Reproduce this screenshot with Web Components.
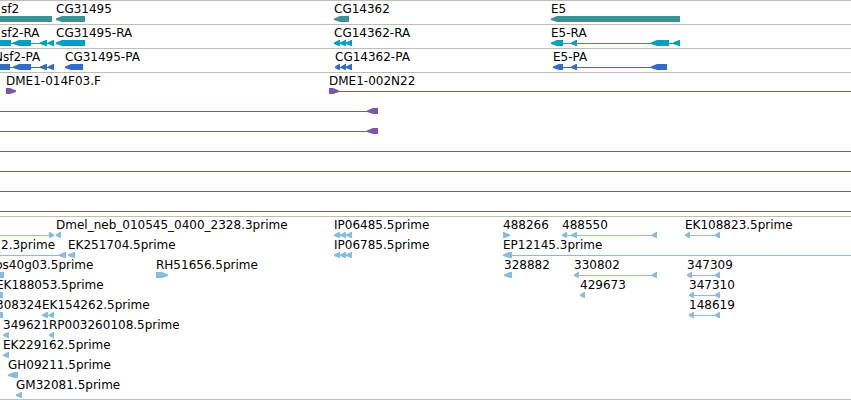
<!DOCTYPE html>
<html lang="en">
<head>
<meta charset="utf-8">
<title>Genome tracks</title>
<style>
body { margin: 0; background: #fff; color: #000; font: 12px/16px "DejaVu Sans", sans-serif; }
</style>
</head>
<body>
<template id="browser-template">
  <style>:host { display: flex; flex-direction: column; overflow: hidden; border-bottom: 1px solid #bdbdbd; }</style>
  <slot></slot>
</template>
<template id="track-template">
  <style>:host { display: flex; flex-direction: column; border-top: 1px solid #bdbdbd; padding-bottom: 3px; }
  :host(:last-child) { padding-bottom: 2px; }</style>
  <slot></slot>
</template>
<template id="lane-template">
  <style>:host { display: block; position: relative; height: 20px; }</style>
  <slot></slot>
</template>
<template id="feature-template">
  <style>
  :host { position: absolute; inset: 0; color: #000; }
  span { position: absolute; top: 0; white-space: nowrap; }
  svg { display: block; width: 100%; height: 100%; overflow: visible; fill: var(--ink); }
  </style>
  <svg aria-hidden="true"></svg><span><slot></slot></span>
</template>

<genome-browser>
  <genome-track style="--ink:#3f9095">
    <genome-lane>
      <genome-feature at="1" parts="-20:52">sf2</genome-feature>
      <genome-feature at="56" parts="56:85">CG31495</genome-feature>
      <genome-feature at="334" parts="334:349">CG14362</genome-feature>
      <genome-feature at="551" parts="551:680">E5</genome-feature>
    </genome-lane>
  </genome-track>
  <genome-track style="--ink:#00a0c2">
    <genome-lane>
      <genome-feature at="1" parts="-20:11 13:31 40:47 48:54">sf2-RA</genome-feature>
      <genome-feature at="56" parts="56:85">CG31495-RA</genome-feature>
      <genome-feature at="334" parts="334:340 340:346 346:352">CG14362-RA</genome-feature>
      <genome-feature at="551" parts="551:563 571:577 651:669 673:680">E5-RA</genome-feature>
    </genome-lane>
  </genome-track>
  <genome-track style="--ink:#316bcd">
    <genome-lane>
      <genome-feature at="-6" parts="-20:10 13:31 40:47 48:54">Nsf2-PA</genome-feature>
      <genome-feature at="65" parts="65:83">CG31495-PA</genome-feature>
      <genome-feature at="335" parts="335:340 341:346 346:352">CG14362-PA</genome-feature>
      <genome-feature at="553" parts="553:563 571:577 651:667">E5-PA</genome-feature>
    </genome-lane>
  </genome-track>
  <genome-track style="--ink:#7657a8">
    <genome-lane>
      <genome-feature at="6" dir="right" parts="6:16">DME1-014F03.F</genome-feature>
      <genome-feature at="329" dir="right" parts="329:339" line="339:end">DME1-002N22</genome-feature>
    </genome-lane>
    <genome-lane><genome-feature parts="367:378" line="0:367"></genome-feature></genome-lane>
    <genome-lane><genome-feature parts="367:378" line="0:367"></genome-feature></genome-lane>
    <genome-lane><genome-feature line="0:end"></genome-feature></genome-lane>
    <genome-lane><genome-feature line="0:end"></genome-feature></genome-lane>
    <genome-lane><genome-feature line="0:end"></genome-feature></genome-lane>
    <genome-lane><genome-feature line="0:end"></genome-feature></genome-lane>
  </genome-track>
  <genome-track style="--ink:#86bcdf">
    <genome-lane>
      <genome-feature dir="right" parts="49:54" line="0:49"></genome-feature>
      <genome-feature at="56" parts="56:61">Dmel_neb_010545_0400_2328.3prime</genome-feature>
      <genome-feature at="334" parts="334:340 340:346 346:352">IP06485.5prime</genome-feature>
      <genome-feature at="503" dir="right" parts="503:510">488266</genome-feature>
      <genome-feature at="562" parts="562:567 571:577 652:657">488550</genome-feature>
      <genome-feature at="685" parts="685:690 715:720">EK108823.5prime</genome-feature>
    </genome-lane>
    <genome-lane>
      <genome-feature at="1" parts="59:66" line="0:59">2.3prime</genome-feature>
      <genome-feature at="68" parts="68:75">EK251704.5prime</genome-feature>
      <genome-feature at="334" parts="334:340 340:346 346:352">IP06785.5prime</genome-feature>
      <genome-feature at="503" parts="503:512" line="512:end">EP12145.3prime</genome-feature>
    </genome-lane>
    <genome-lane>
      <genome-feature at="-5" parts="-10:4">bs40g03.5prime</genome-feature>
      <genome-feature at="156" dir="right" parts="156:168">RH51656.5prime</genome-feature>
      <genome-feature at="504" parts="504:512">328882</genome-feature>
      <genome-feature at="574" parts="574:579 652:657">330802</genome-feature>
      <genome-feature at="687" parts="687:692 715:720">347309</genome-feature>
    </genome-lane>
    <genome-lane>
      <genome-feature at="-4" parts="-10:3">EK188053.5prime</genome-feature>
      <genome-feature at="580" parts="580:585">429673</genome-feature>
      <genome-feature at="689" parts="689:694 715:720">347310</genome-feature>
    </genome-lane>
    <genome-lane>
      <genome-feature at="-4" parts="-10:3">308324</genome-feature>
      <genome-feature at="42" parts="42:48 49:54">EK154262.5prime</genome-feature>
      <genome-feature at="689" parts="689:694 715:720">148619</genome-feature>
    </genome-lane>
    <genome-lane>
      <genome-feature at="3" parts="3:9">349621</genome-feature>
      <genome-feature at="49" parts="49:54">RP003260108.5prime</genome-feature>
    </genome-lane>
    <genome-lane><genome-feature at="3" parts="3:9">EK229162.5prime</genome-feature></genome-lane>
    <genome-lane><genome-feature at="8" parts="8:18">GH09211.5prime</genome-feature></genome-lane>
    <genome-lane><genome-feature at="16" parts="16:22">GM32081.5prime</genome-feature></genome-lane>
  </genome-track>
</genome-browser>

<script>
function attach(host, id) {
  const root = host.attachShadow({ mode: "open" });
  root.append(document.getElementById(id).content.cloneNode(true));
  return root;
}
customElements.define("genome-browser", class extends HTMLElement {
  constructor() { super(); attach(this, "browser-template"); }
});
customElements.define("genome-track", class extends HTMLElement {
  constructor() { super(); attach(this, "track-template"); }
});
customElements.define("genome-lane", class extends HTMLElement {
  constructor() { super(); attach(this, "lane-template"); }
});
customElements.define("genome-feature", class extends HTMLElement {
  constructor() { super(); this.root = attach(this, "feature-template"); }
  connectedCallback() {
    const right = this.getAttribute("dir") === "right";
    const parts = (this.getAttribute("parts") || "").split(" ").filter(Boolean)
      .map(p => p.split(":").map(Number));
    let shapes = "";
    const line = this.getAttribute("line");
    if (line) {
      const [a, b] = line.split(":");
      shapes += `<rect x="${a}" y="18" width="${b === "end" ? "100%" : b - a}" height="1"/>`;
    }
    if (parts.length > 1) {
      const a = parts[0][0], b = parts[parts.length - 1][1];
      shapes += `<rect x="${a}" y="18" width="${b - a}" height="1"/>`;
    }
    // Each exon is a bar whose leading end tapers to a blunt point in the strand direction.
    for (const [a, b] of parts) {
      const tip = right ? b : a, tail = right ? a : b, s = right ? -1 : 1;
      const neck = tip + s * Math.min(6, b - a - 1);
      shapes += `<path d="M${tip} 17.5L${neck} 15H${tail}V21H${neck}L${tip} 19z"/>`;
    }
    this.root.querySelector("svg").innerHTML = shapes;
    this.root.querySelector("span").style.left = (this.getAttribute("at") || 0) + "px";
  }
});
</script>
</body>
</html>
